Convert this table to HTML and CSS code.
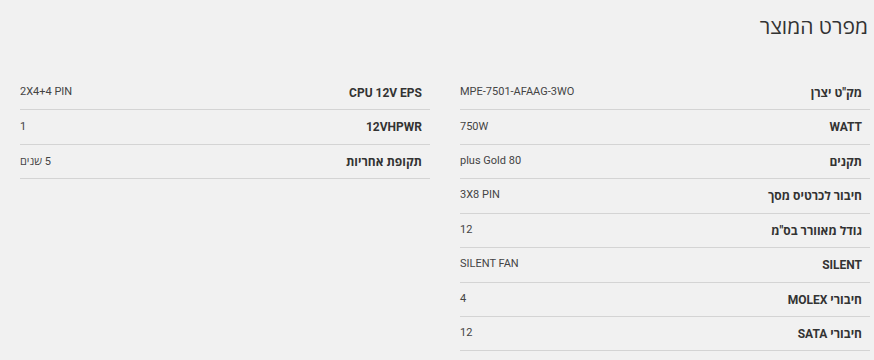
FILE: index.html
```html
<!DOCTYPE html>
<html lang="he" dir="rtl">
<head>
<meta charset="utf-8">
<link rel="stylesheet" href="styles.css">
</head>
<body>
<div class="page">
  <h2 class="title">מפרט המוצר</h2>
  <div class="specs">
    <div class="col">
      <div class="row"><div class="label">מק"ט יצרן</div><div class="value">MPE-7501-AFAAG-3WO</div></div>
      <div class="row"><div class="label">WATT</div><div class="value">750W</div></div>
      <div class="row"><div class="label">תקנים</div><div class="value">plus Gold 80</div></div>
      <div class="row"><div class="label">חיבור לכרטיס מסך</div><div class="value">3X8 PIN</div></div>
      <div class="row"><div class="label">גודל מאוורר בס"מ</div><div class="value">12</div></div>
      <div class="row"><div class="label">SILENT</div><div class="value">SILENT FAN</div></div>
      <div class="row"><div class="label">חיבורי MOLEX</div><div class="value">4</div></div>
      <div class="row"><div class="label">חיבורי SATA</div><div class="value">12</div></div>
    </div>
    <div class="col">
      <div class="row"><div class="label">CPU 12V EPS</div><div class="value">2X4+4 PIN</div></div>
      <div class="row"><div class="label">12VHPWR</div><div class="value">1</div></div>
      <div class="row"><div class="label">תקופת אחריות</div><div class="value">5 שנים</div></div>
    </div>
  </div>
</div>
</body>
</html>
```
FILE: styles.css
```css
html, body {
  margin: 0;
  padding: 0;
  background: #f1f1f1;
}
body {
  font-family: Roboto, "Open Sans", "Noto Sans", sans-serif;
  color: #333;
}
.page {
  padding: 12px 4px 0 20px;
}
.title {
  margin: 0;
  padding-right: 2px;
  font-family: "Open Sans", "Noto Sans", sans-serif;
  font-size: 21px;
  font-weight: 400;
  line-height: 28px;
  color: #333;
}
.specs {
  margin-top: 36px;
  display: grid;
  grid-template-columns: 1fr 1fr;
  column-gap: 30px;
  align-items: start;
}
.row {
  display: flex;
  justify-content: space-between;
  align-items: center;
  height: 34.43px;
  box-sizing: border-box;
  border-bottom: 1px solid #d4d4d4;
  padding-right: 8px;
}
.label {
  font-size: 12px;
  font-weight: 700;
  color: #333;
}
.value {
  font-size: 11px;
  color: #444;
  margin-top: -2px;
}
```
